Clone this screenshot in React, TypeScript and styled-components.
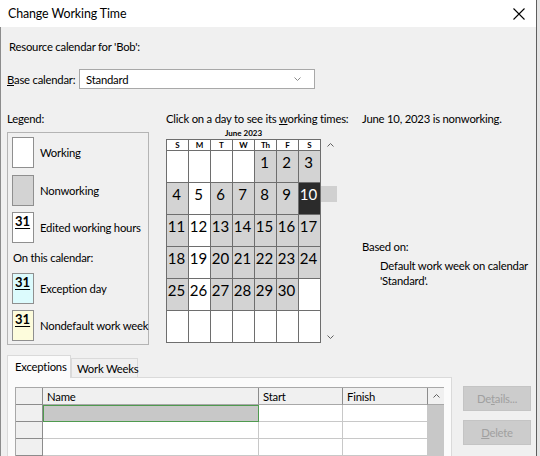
import React from 'react';
import styled, { createGlobalStyle } from 'styled-components';

const FONT = `Lato, "Liberation Sans", Arial, sans-serif`;

const Global = createGlobalStyle`
  html, body { margin: 0; padding: 0; }
  body {
    width: 540px; height: 456px; overflow: hidden;
    background: #e8e8e8;
    font-family: ${FONT};
    font-size: 11.3px;
    letter-spacing: -0.22px;
    color: #000;
  }
  * { box-sizing: border-box; }
`;

const Screen = styled.div`
  display: flex;
  width: 540px;
  height: 456px;
`;

const Dialog = styled.div`
  width: 537px;
  height: 456px;
  display: flex;
  flex-direction: column;
  background: #f0f0f0;
  border-right: 1px solid #5e5e5e;
  overflow: hidden;
`;

const Behind = styled.div`
  flex: 1;
  background: #e4e4e4;
`;

const TitleBar = styled.div`
  height: 27px;
  flex: none;
  background: #fff;
  display: flex;
  align-items: center;
  justify-content: space-between;
  padding: 0 11px 0 8px;
`;

const Title = styled.div`
  font-size: 12.4px;
  letter-spacing: -0.1px;
  color: #000;
`;

const CloseBtn = styled.div`
  width: 12px;
  height: 12px;
  display: flex;
`;

const Body = styled.div`
  flex: 1;
  border-left: 1px solid #8c8c8c;
  padding: 12px 0 0 6px;
  display: flex;
  flex-direction: column;
`;

const Line = styled.div<{ $indent?: number }>`
  line-height: 16px;
  white-space: nowrap;
  margin-left: ${(p) => p.$indent ?? 0}px;
`;

const BaseRow = styled.div`
  margin-top: 14px;
  display: flex;
  align-items: center;
  height: 20px;
`;

const BaseLabel = styled.div`
  width: 72px;
  white-space: nowrap;
`;

const Select = styled.div`
  width: 236px;
  height: 20px;
  background: #fff;
  border: 1px solid #a8a8a8;
  display: flex;
  align-items: center;
  justify-content: space-between;
  padding: 0 13px 0 6px;
`;

const Middle = styled.div`
  margin-top: 22px;
  display: flex;
  align-items: flex-start;
`;

const LegendCol = styled.div`
  width: 142px;
  display: flex;
  flex-direction: column;
`;

const LegendBox = styled.div`
  margin-top: 5px;
  height: 213px;
  border: 1px solid #b4b4b4;
  padding: 4px 0 0 4px;
  display: flex;
  flex-direction: column;
`;

const LegendItem = styled.div<{ $gap: number }>`
  display: flex;
  align-items: center;
  gap: 6px;
  margin-top: ${(p) => p.$gap}px;
  white-space: nowrap;
`;

const Swatch = styled.div<{ $bg: string }>`
  width: 22px;
  height: 31px;
  flex: none;
  background: ${(p) => p.$bg};
  border: 1px solid #8f8f8f;
  padding: 1px 0 0 2px;
  font-weight: 700;
  font-size: 13px;
  letter-spacing: 0;
  line-height: 15px;
  text-decoration: underline;
  text-underline-offset: 2px;
`;

const LegendNote = styled.div`
  margin-top: 7px;
  margin-left: 1px;
  line-height: 16px;
`;

const CalCol = styled.div`
  margin-left: 17px;
  width: 196px;
  display: flex;
  flex-direction: column;
`;

const MonthLabel = styled.div`
  width: 155px;
  height: 12px;
  font-size: 8px;
  font-weight: 700;
  letter-spacing: 0;
  line-height: 12px;
  text-align: center;
`;

const CalRow = styled.div`
  display: flex;
`;

const Grid = styled.div`
  display: grid;
  grid-template-columns: repeat(7, 21px);
  grid-template-rows: 10px repeat(6, 31px);
  gap: 1px;
  background: #6e6e6e;
  border: 1px solid #6e6e6e;
`;

const DayHead = styled.div`
  background: #fff;
  font-size: 8px;
  font-weight: 700;
  letter-spacing: 0;
  line-height: 10px;
  text-align: center;
`;

type Kind = 'w' | 'n' | 's';

const Day = styled.div<{ $kind: Kind }>`
  background: ${(p) => (p.$kind === 's' ? '#2b2b2b' : p.$kind === 'n' ? '#d3d3d3' : '#fff')};
  color: ${(p) => (p.$kind === 's' ? '#fff' : '#000')};
  font-size: 15px;
  letter-spacing: 0;
  line-height: 18px;
  padding: 2px 2px 0 0;
  text-align: center;
`;

const ScrollCol = styled.div`
  width: 16px;
  display: flex;
  flex-direction: column;
`;

const Arrow = styled.div`
  height: 12px;
  display: flex;
  align-items: center;
  justify-content: center;
  padding-left: 3px;
`;

const Thumb = styled.div`
  margin-top: 35px;
  height: 16px;
  background: #d0d0d0;
`;

const Spacer = styled.div`
  flex: 1;
`;

const InfoCol = styled.div`
  display: flex;
  flex-direction: column;
`;

const InfoBlock = styled.div<{ $top: number; $indent: number }>`
  margin-top: ${(p) => p.$top}px;
  margin-left: ${(p) => p.$indent}px;
  line-height: 15px;
  white-space: nowrap;
`;

const Bottom = styled.div`
  margin-top: 10px;
  display: flex;
  align-items: flex-start;
`;

const TabsArea = styled.div`
  width: 445px;
  display: flex;
  flex-direction: column;
`;

const TabStrip = styled.div`
  height: 23px;
  display: flex;
  align-items: flex-end;
`;

const Tab = styled.div<{ $active?: boolean }>`
  height: ${(p) => (p.$active ? 23 : 20)}px;
  width: ${(p) => (p.$active ? 64 : 67)}px;
  background: ${(p) => (p.$active ? '#fbfbfb' : '#f0f0f0')};
  border: 1px solid #dadada;
  border-bottom: ${(p) => (p.$active ? 'none' : '1px solid #dadada')};
  padding-left: ${(p) => (p.$active ? 7 : 5)}px;
  line-height: ${(p) => (p.$active ? 22 : 20)}px;
  white-space: nowrap;
  position: relative;
  z-index: ${(p) => (p.$active ? 1 : 0)};
`;

const Panel = styled.div`
  height: 100px;
  margin-top: -1px;
  background: #fbfbfb;
  border: 1px solid #dadada;
  padding: 9px 0 0 7px;
`;

const Table = styled.div`
  display: grid;
  grid-template-columns: 27px 216px 84px 85px 16px;
  grid-template-rows: repeat(4, 17px);
  border-top: 1px solid #a8a8a8;
  border-left: 1px solid #a8a8a8;
  width: 429px;
`;

type CellKind = 'corner' | 'head' | 'rowhead' | 'data' | 'sel';

const Cell = styled.div<{ $kind: CellKind }>`
  background: ${(p) =>
    p.$kind === 'head' || p.$kind === 'corner' || p.$kind === 'rowhead'
      ? '#f0f0f0'
      : p.$kind === 'sel'
      ? '#c8c8c8'
      : '#fff'};
  border-right: 1px solid ${(p) => (p.$kind === 'data' || p.$kind === 'sel' ? '#c8c8c8' : '#8c8c8c')};
  border-bottom: 1px solid ${(p) => (p.$kind === 'data' || p.$kind === 'sel' ? '#c8c8c8' : '#8c8c8c')};
  ${(p) => (p.$kind === 'sel' ? 'outline: 1px solid #4f9a4f; outline-offset: -1px; border-right-color:#4f9a4f;' : '')}
  ${(p) => (p.$kind === 'head' ? 'border-bottom-color:#a8a8a8;' : '')}
  padding-left: 4px;
  line-height: 17px;
  white-space: nowrap;
`;

const ScrollHead = styled.div`
  background: #f0f0f0;
  border-bottom: 1px solid #a8a8a8;
  display: flex;
  align-items: center;
  justify-content: center;
`;

const Track = styled.div`
  grid-row: 2 / span 3;
  grid-column: 5;
  background: #c8c8c8;
`;

const ButtonsCol = styled.div`
  margin-left: 11px;
  margin-top: 31px;
  display: flex;
  flex-direction: column;
  gap: 9px;
`;

const Button = styled.div`
  width: 68px;
  height: 25px;
  background: #cccccc;
  border: 1px solid #c4c4c4;
  color: #a0a0a0;
  display: flex;
  align-items: center;
  justify-content: center;
`;

const U = styled.span`
  text-decoration: underline;
  text-underline-offset: 1px;
`;

const Chevron = ({ up, color = '#606060' }: { up?: boolean; color?: string }) => (
  <svg width="7" height="4" viewBox="0 0 7 4">
    <path d={up ? 'M0.5 3.5 L3.5 0.5 L6.5 3.5' : 'M0.5 0.5 L3.5 3.5 L6.5 0.5'} fill="none" stroke={color} strokeWidth="1" />
  </svg>
);

const rows: { n: string; k: Kind }[][] = [
  [
    { n: '', k: 'w' }, { n: '', k: 'w' }, { n: '', k: 'w' }, { n: '', k: 'w' },
    { n: '1', k: 'n' }, { n: '2', k: 'n' }, { n: '3', k: 'n' },
  ],
  [
    { n: '4', k: 'n' }, { n: '5', k: 'w' }, { n: '6', k: 'n' }, { n: '7', k: 'n' },
    { n: '8', k: 'n' }, { n: '9', k: 'n' }, { n: '10', k: 's' },
  ],
  [
    { n: '11', k: 'n' }, { n: '12', k: 'w' }, { n: '13', k: 'n' }, { n: '14', k: 'n' },
    { n: '15', k: 'n' }, { n: '16', k: 'n' }, { n: '17', k: 'n' },
  ],
  [
    { n: '18', k: 'n' }, { n: '19', k: 'w' }, { n: '20', k: 'n' }, { n: '21', k: 'n' },
    { n: '22', k: 'n' }, { n: '23', k: 'n' }, { n: '24', k: 'n' },
  ],
  [
    { n: '25', k: 'n' }, { n: '26', k: 'w' }, { n: '27', k: 'n' }, { n: '28', k: 'n' },
    { n: '29', k: 'n' }, { n: '30', k: 'n' }, { n: '', k: 'w' },
  ],
  [
    { n: '', k: 'w' }, { n: '', k: 'w' }, { n: '', k: 'w' }, { n: '', k: 'w' },
    { n: '', k: 'w' }, { n: '', k: 'w' }, { n: '', k: 'w' },
  ],
];

const heads = ['S', 'M', 'T', 'W', 'Th', 'F', 'S'];

export default function App() {
  return (
    <>
      <Global />
      <Screen>
        <Dialog>
          <TitleBar>
            <Title>Change Working Time</Title>
            <CloseBtn>
              <svg width="12" height="12" viewBox="0 0 12 12">
                <path d="M0.5 0.5 L11.5 11.5 M11.5 0.5 L0.5 11.5" stroke="#000" strokeWidth="1.1" />
              </svg>
            </CloseBtn>
          </TitleBar>
          <Body>
            <Line $indent={2}>Resource calendar for 'Bob':</Line>
            <BaseRow>
              <BaseLabel>
                <U>B</U>ase calendar:
              </BaseLabel>
              <Select>
                <span>Standard</span>
                <Chevron color="#8a8a8a" />
              </Select>
            </BaseRow>
            <Middle>
              <LegendCol>
                <Line>Legend:</Line>
                <LegendBox>
                  <LegendItem $gap={0}>
                    <Swatch $bg="#fff" />
                    <span>Working</span>
                  </LegendItem>
                  <LegendItem $gap={7}>
                    <Swatch $bg="#d3d3d3" />
                    <span>Nonworking</span>
                  </LegendItem>
                  <LegendItem $gap={6}>
                    <Swatch $bg="#fff">31</Swatch>
                    <span>Edited working hours</span>
                  </LegendItem>
                  <LegendNote>On this calendar:</LegendNote>
                  <LegendItem $gap={7}>
                    <Swatch $bg="#dcfbfd">31</Swatch>
                    <span>Exception day</span>
                  </LegendItem>
                  <LegendItem $gap={6}>
                    <Swatch $bg="#fdfcdc">31</Swatch>
                    <span>Nondefault work week</span>
                  </LegendItem>
                </LegendBox>
              </LegendCol>
              <CalCol>
                <Line>
                  Click on a day to see its <U>w</U>orking times:
                </Line>
                <MonthLabel>June 2023</MonthLabel>
                <CalRow>
                  <Grid>
                    {heads.map((h, i) => (
                      <DayHead key={'h' + i}>{h}</DayHead>
                    ))}
                    {rows.flat().map((d, i) => (
                      <Day key={i} $kind={d.k}>
                        {d.n}
                      </Day>
                    ))}
                  </Grid>
                  <ScrollCol>
                    <Arrow>
                      <Chevron up />
                    </Arrow>
                    <Thumb />
                    <Spacer />
                    <Arrow>
                      <Chevron />
                    </Arrow>
                  </ScrollCol>
                </CalRow>
              </CalCol>
              <InfoCol>
                <Line>June 10, 2023 is nonworking.</Line>
                <InfoBlock $top={112} $indent={0}>Based on:</InfoBlock>
                <InfoBlock $top={4} $indent={18}>
                  Default work week on calendar
                  <br />
                  'Standard'.
                </InfoBlock>
              </InfoCol>
            </Middle>
            <Bottom>
              <TabsArea>
                <TabStrip>
                  <Tab $active>Exceptions</Tab>
                  <Tab>Work Weeks</Tab>
                </TabStrip>
                <Panel>
                  <Table>
                    <Cell $kind="corner" />
                    <Cell $kind="head">Name</Cell>
                    <Cell $kind="head">Start</Cell>
                    <Cell $kind="head">Finish</Cell>
                    <ScrollHead>
                      <Chevron up />
                    </ScrollHead>
                    {[0, 1, 2].map((r) => (
                      <React.Fragment key={r}>
                        <Cell $kind="rowhead" />
                        <Cell $kind={r === 0 ? 'sel' : 'data'} />
                        <Cell $kind="data" />
                        <Cell $kind="data" />
                      </React.Fragment>
                    ))}
                    <Track />
                  </Table>
                </Panel>
              </TabsArea>
              <ButtonsCol>
                <Button>
                  <span>
                    De<U>t</U>ails...
                  </span>
                </Button>
                <Button>
                  <span>
                    <U>D</U>elete
                  </span>
                </Button>
              </ButtonsCol>
            </Bottom>
          </Body>
        </Dialog>
        <Behind />
      </Screen>
    </>
  );
}
